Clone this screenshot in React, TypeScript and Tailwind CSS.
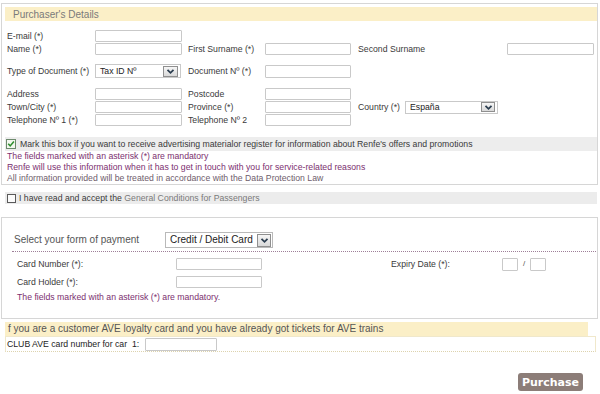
import React from "react";

const label = "text-[8.7px] leading-none text-[#3a3a3a] whitespace-nowrap";

function Box({ className }: { className: string }) {
  return (
    <input
      readOnly
      className={"box-border border border-[#c9c9c9] bg-white rounded-[1px] outline-none " + className}
    />
  );
}

function Arrow({ className }: { className: string }) {
  return (
    <span
      className={
        "box-border flex items-center justify-center border border-[#8f8f8f] bg-gradient-to-b from-[#f6f6f6] to-[#d9d9d9] " +
        className
      }
    >
      <svg width="9" height="7" viewBox="0 0 9 7">
        <path d="M1.5 1.8 L4.5 4.8 L7.5 1.8" fill="none" stroke="#2c3e50" strokeWidth="1.8" />
      </svg>
    </span>
  );
}

function Checked() {
  return (
    <svg width="10" height="10" viewBox="0 0 10 10" className="ml-[1px] shrink-0">
      <rect x="0.5" y="0.5" width="9" height="9" fill="#f3f7ef" stroke="#6d8a6d" />
      <path d="M2.2 4.8 L4.2 6.9 L7.9 2.6" fill="none" stroke="#2f8f2f" strokeWidth="1.6" />
    </svg>
  );
}

function Unchecked() {
  return (
    <svg width="9" height="9" viewBox="0 0 9 9" className="ml-[2px] shrink-0">
      <rect x="0.5" y="0.5" width="8" height="8" fill="#fbfbfb" stroke="#5a5a5a" />
    </svg>
  );
}

export default function App() {
  return (
    <div className="w-[600px] h-[394px] overflow-hidden bg-white font-['Liberation_Sans',Arial,sans-serif] pt-[3px]">
      {/* Purchaser's details */}
      <div className="ml-[1px] w-[597px] border border-[#d6d6d6] pl-[3px]">
        <div className="mt-[3px] h-[14px] bg-[#fbefc7] pl-[8px] flex items-center text-[10px] text-[#7a7a7a]">
          Purchaser's Details
        </div>

        <div className="mt-[9px] h-[12px] pl-[2px] flex items-center">
          <span className={label + " w-[88px]"}>E-mail (*)</span>
          <Box className="w-[87px] h-[12px]" />
        </div>

        <div className="mt-[1px] h-[12px] pl-[2px] flex items-center">
          <span className={label + " w-[88px]"}>Name (*)</span>
          <Box className="w-[87px] h-[12px]" />
          <span className={label + " ml-[6px] w-[77px]"}>First Surname (*)</span>
          <Box className="w-[86px] h-[12px]" />
          <span className={label + " ml-[7px] w-[149px]"}>Second Surname</span>
          <Box className="w-[87px] h-[12px]" />
        </div>

        <div className="mt-[9px] h-[14px] pl-[2px] flex items-center">
          <span className={label + " w-[88px]"}>Type of Document (*)</span>
          <div className="box-border w-[86px] h-[14px] border border-[#c9c9c9] bg-white flex items-center justify-between pl-[4px] pr-[2px]">
            <span className="text-[8.7px] leading-none text-[#222]">Tax ID Nº</span>
            <Arrow className="w-[15px] h-[11px]" />
          </div>
          <span className={label + " ml-[7px] w-[77px]"}>Document Nº (*)</span>
          <Box className="w-[86px] h-[13px]" />
        </div>

        <div className="mt-[10px] h-[12px] pl-[2px] flex items-center">
          <span className={label + " w-[88px]"}>Address</span>
          <Box className="w-[87px] h-[12px]" />
          <span className={label + " ml-[6px] w-[77px]"}>Postcode</span>
          <Box className="w-[86px] h-[12px]" />
        </div>

        <div className="mt-[1px] h-[12px] pl-[2px] flex items-center">
          <span className={label + " w-[88px]"}>Town/City (*)</span>
          <Box className="w-[87px] h-[12px]" />
          <span className={label + " ml-[6px] w-[77px]"}>Province (*)</span>
          <Box className="w-[86px] h-[12px]" />
          <span className={label + " ml-[7px] w-[47px]"}>Country (*)</span>
          <div className="box-border w-[93px] h-[13px] border border-[#c9c9c9] bg-white flex items-center justify-between pl-[4px] pr-[2px]">
            <span className="text-[8.7px] leading-none text-[#222]">España</span>
            <Arrow className="w-[14px] h-[10px]" />
          </div>
        </div>

        <div className="mt-[1px] h-[12px] pl-[2px] flex items-center">
          <span className={label + " w-[88px]"}>Telephone Nº 1 (*)</span>
          <Box className="w-[87px] h-[12px]" />
          <span className={label + " ml-[6px] w-[77px]"}>Telephone Nº 2</span>
          <Box className="w-[86px] h-[12px]" />
        </div>

        <div className="mt-[11px] h-[14px] bg-[#ededed] flex items-center">
          <Checked />
          <span className={label + " ml-[4px]"}>
            Mark this box if you want to receive advertising materialor register for information about Renfe's offers and promotions
          </span>
        </div>

        <div className="pl-[2px] text-[8.7px] leading-[11px]">
          <div className="text-[#7b2f6f]">The fields marked with an asterisk (*) are mandatory</div>
          <div className="text-[#7b2f6f]">Renfe will use this information when it has to get in touch with you for service-related reasons</div>
          <div className="text-[#6e5d6b]">All information provided will be treated in accordance with the Data Protection Law</div>
        </div>
      </div>

      {/* Conditions */}
      <div className="mt-[7px] ml-[5px] w-[592px] h-[12px] bg-[#ececec] flex items-center">
        <Unchecked />
        <span className={label + " ml-[3px]"}>
          I have read and accept the <span className="text-[#7a7a7a]">General Conditions for Passengers</span>
        </span>
      </div>

      {/* Payment */}
      <div className="mt-[13px] ml-[1px] w-[597px] border border-[#d6d6d6] pt-[14px] pb-[16px]">
        <div className="h-[16px] pl-[12px] flex items-center">
          <span className="w-[151px] text-[10px] leading-none text-[#555]">Select your form of payment</span>
          <div className="box-border w-[108px] h-[16px] border border-[#b9b9b9] bg-white flex items-center justify-between pl-[4px] pr-[1px]">
            <span className="text-[10px] leading-none text-[#222]">Credit / Debit Card</span>
            <Arrow className="w-[14px] h-[13px]" />
          </div>
        </div>
        <div className="mt-[3px] ml-[10px] mr-[1px] border-t border-dotted border-[#9e7f98]" />

        <div className="mt-[6px] h-[12px] pl-[15px] flex items-center">
          <span className={label + " w-[159px]"}>Card Number (*):</span>
          <Box className="w-[86px] h-[12px]" />
          <span className={label + " ml-[129px] w-[111px]"}>Expiry Date (*):</span>
          <Box className="w-[16px] h-[13px]" />
          <span className="w-[12px] text-center text-[8px] leading-none text-[#555]">/</span>
          <Box className="w-[16px] h-[13px]" />
        </div>

        <div className="mt-[6px] h-[12px] pl-[15px] flex items-center">
          <span className={label + " w-[159px]"}>Card Holder (*):</span>
          <Box className="w-[86px] h-[12px]" />
        </div>

        <div className="mt-[4px] pl-[15px] text-[8.7px] leading-[10px] text-[#7b2f6f]">
          The fields marked with an asterisk (*) are mandatory.
        </div>
      </div>

      {/* AVE loyalty */}
      <div className="mt-[3px] ml-[5px] w-[583px] h-[14px] bg-[#fbefc7] pl-[3px] flex items-center text-[10px] leading-none text-[#555]">
        f you are a customer AVE loyalty card and you have already got tickets for AVE trains
      </div>
      <div className="ml-[5px] w-[591px] h-[16px] border border-[#f0e8cb] [border-bottom-style:dotted] border-b-[#ddd3ae] pl-[1px] flex items-center">
        <span className={label + " w-[138px] text-[#222]"}>CLUB AVE card number for car&nbsp;&nbsp;1:</span>
        <Box className="w-[72px] h-[13px]" />
      </div>

      <div className="mt-[21px] pr-[17px] flex justify-end">
        <button className="w-[65px] h-[18px] rounded-[3px] bg-[#8c7d78] text-white font-bold text-[11px] leading-none font-['DejaVu_Sans',Verdana,sans-serif] flex items-center justify-center">
          Purchase
        </button>
      </div>
    </div>
  );
}
